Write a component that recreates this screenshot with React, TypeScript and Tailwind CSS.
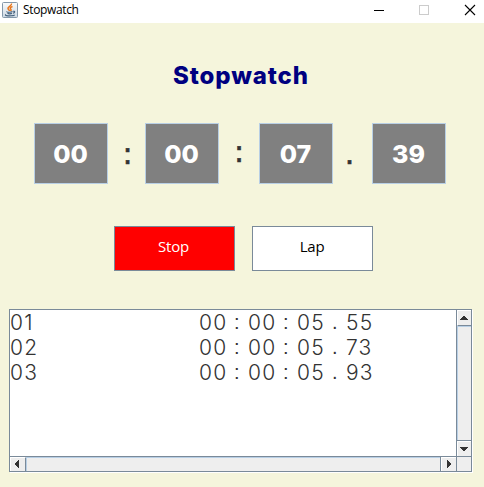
const DARK = "#333333";

function JavaIcon() {
  return (
    <svg width="16" height="16" viewBox="0 0 16 16" className="block">
      <defs>
        <linearGradient id="tile" x1="0" y1="0" x2="0" y2="1">
          <stop offset="0" stopColor="#fafbfc" />
          <stop offset="1" stopColor="#ccd8e3" />
        </linearGradient>
      </defs>
      <rect x=".5" y=".5" width="15" height="15" rx="1" fill="url(#tile)" stroke="#8498aa" />
      <path d="M9.500 1.500C10 4 5.500 4.500 6 6.500C6.200 7.500 7.500 8 7.500 9M10.500 4.500C7.500 5.500 8 6.500 9 7.500C9.300 8.200 8.800 8.700 8.500 9" fill="none" stroke="#e8751a" strokeWidth="1.500" />
      <path d="M5 9.500C4 10.300 9 10.500 10.500 9.500M5.500 11.300C6.500 12 9 12 10 11.300M11 9.300C13.500 8.700 13 10.700 11 11.200M4 12.500C2 13.500 6 14 9 13.800C11 13.700 12.500 13.300 12.500 12.700" fill="none" stroke="#46627e" strokeWidth="1.100" />
    </svg>
  );
}

function TitleBar() {
  return (
    <header className="flex h-[23px] items-start bg-white">
      <div className="ml-[2px] mt-[2px] w-[21px]"><JavaIcon /></div>
      <span className="mt-[2px] font-['Open_Sans','Noto_Sans',sans-serif] text-[12px] leading-[16px] tracking-[-0.35px] text-black">Stopwatch</span>
      <svg width="110" height="20" viewBox="0 0 110 20" className="ml-auto block" shapeRendering="crispEdges">
        <rect x="0" y="10" width="10" height="1" fill="#000" />
        <rect x="45.500" y="5.500" width="9" height="9" fill="none" stroke="#ccc" />
        <path d="M91 5L101 15M101 5L91 15" stroke="#000" strokeWidth="1.100" shapeRendering="auto" />
      </svg>
    </header>
  );
}

function TimeBox({ value }: { value: string }) {
  return (
    <div className="flex h-[61px] w-[74px] justify-center border border-[#b8cfe5] bg-[#808080] pt-[14px] pr-[1px] font-['Inter',sans-serif] text-[25px] leading-[32px] font-extrabold text-white">
      {value}
    </div>
  );
}

function Separator({ mark, className }: { mark: string; className: string }) {
  return (
    <span className={`text-center font-['DejaVu_Sans',sans-serif] text-[30px] leading-[32px] text-[#333333] [-webkit-text-stroke:0.6px_#333333] ${className}`}>
      {mark}
    </span>
  );
}

function Mark({ children }: { children: string }) {
  return (
    <span className="w-[20px] pl-[6px] font-['Liberation_Sans',sans-serif] text-[20px]">{children}</span>
  );
}

function Lap({ index, parts }: { index: string; parts: string[] }) {
  const [h, m, s, cs] = parts;
  return (
    <div className="flex h-[25px]">
      <span className="w-[189px]">{index}</span>
      <span className="w-[29px]">{h}</span>
      <Mark>:</Mark>
      <span className="w-[29px]">{m}</span>
      <Mark>:</Mark>
      <span className="w-[29px]">{s}</span>
      <Mark>.</Mark>
      <span>{cs}</span>
    </div>
  );
}

function Arrow({ d }: { d: string }) {
  return (
    <svg width="14" height="14" viewBox="0 0 14 14" className="block" shapeRendering="crispEdges">
      <path d={d} fill={DARK} />
    </svg>
  );
}

function LapPanel() {
  return (
    <section className="ml-[9px] mt-[38px] grid h-[163px] w-[463px] grid-cols-[446px_15px] grid-rows-[146px_15px] border border-[#7a8a99] shadow-[1px_1px_0_#fff]">
      <div className="overflow-hidden bg-white font-['Inter',sans-serif] text-[21px] leading-[25px] font-light tracking-[1.2px] text-[#333333]">
        <Lap index="01" parts={["00", "00", "05", "55"]} />
        <Lap index="02" parts={["00", "00", "05", "73"]} />
        <Lap index="03" parts={["00", "00", "05", "93"]} />
      </div>
      <div className="flex flex-col border-l border-[#7a8a99] bg-[#eeeeee]">
        <div className="h-[16px] border-t border-b border-l border-t-white border-b-[#7a8a99] border-l-white">
          <Arrow d="M5 5H7V6H8V7H9V8H10V9H2V8H3V7H4V6H5Z" />
        </div>
        <div className="flex-1 border-t border-l border-[#b8cfe5]" />
        <div className="h-[16px] border-t border-[#7a8a99]">
          <div className="h-[15px] border-t border-l border-white">
            <Arrow d="M2 5H10V6H9V7H8V8H7V9H5V8H4V7H3V6H2Z" />
          </div>
        </div>
      </div>
      <div className="flex border-t border-[#7a8a99] bg-[#eeeeee]">
        <div className="w-[16px] border-t border-r border-l border-t-white border-r-[#7a8a99] border-l-white">
          <Arrow d="M8 2V10H7V9H6V8H5V7H4V5H5V4H6V3H7V2Z" />
        </div>
        <div className="flex-1 border-t border-l border-[#b8cfe5]" />
        <div className="w-[16px] border-l border-[#7a8a99]">
          <div className="h-full border-t border-l border-white">
            <Arrow d="M5 2H6V3H7V4H8V5H9V7H8V8H7V9H6V10H5Z" />
          </div>
        </div>
      </div>
      <div className="border-t border-l border-[#7a8a99] bg-[#eeeeee]" />
    </section>
  );
}

export default function App() {
  return (
    <div className="h-[487px] w-[484px] overflow-hidden bg-[#f5f5dc]">
      <TitleBar />
      <h1 className="ml-[173px] mt-[37px] h-[32px] font-['Inter',sans-serif] text-[24px] leading-[32px] font-extrabold tracking-[0.9px] whitespace-nowrap text-[#000080]">
        Stopwatch
      </h1>
      <div className="ml-[34px] mt-[31px] flex h-[61px]">
        <TimeBox value="00" />
        <Separator mark=":" className="w-[37px] pt-[15px] pl-[2px]" />
        <TimeBox value="00" />
        <Separator mark=":" className="w-[40px] pt-[13px]" />
        <TimeBox value="07" />
        <Separator mark="." className="w-[39px] pt-[15px] pr-[6px]" />
        <TimeBox value="39" />
      </div>
      <div className="ml-[114px] mt-[42px] flex gap-[17px] font-['Open_Sans','Noto_Sans',sans-serif] text-[15px] leading-[20px] tracking-[-0.2px]">
        <button className="h-[45px] w-[121px] border border-[#7a8a99] bg-[#ff0000] pr-[2px] pb-[5px] text-white">Stop</button>
        <button className="h-[45px] w-[121px] border border-[#7a8a99] bg-white pr-px pb-[5px] text-black">Lap</button>
      </div>
      <LapPanel />
    </div>
  );
}
